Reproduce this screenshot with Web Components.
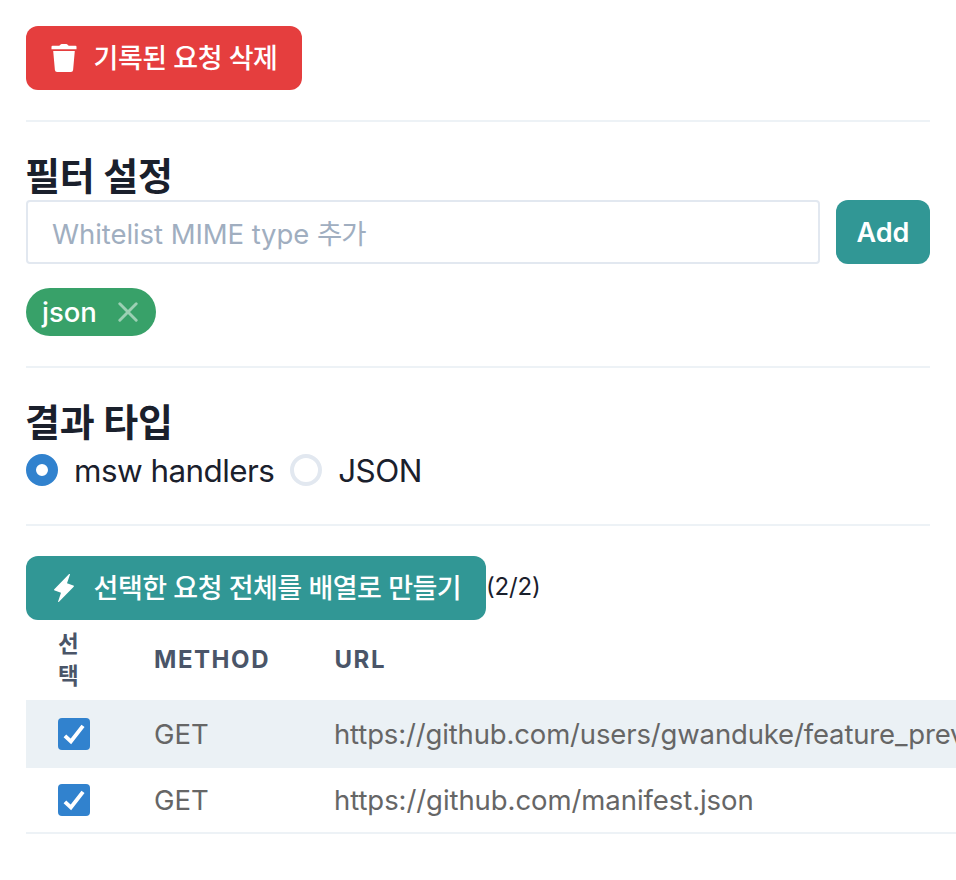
<!DOCTYPE html>
<html lang="ko">
<head>
<meta charset="utf-8">
<title>Request recorder</title>
<style>
html,body{margin:0;background:#fff;overflow:hidden}
body{height:880px;font-family:Inter,"Noto Sans CJK KR",sans-serif;color:#1a202c;line-height:1}
</style>
</head>
<body>
<recorder-app></recorder-app>
<script>
function define(name, html) {
  const t = document.createElement('template');
  t.innerHTML = html;
  customElements.define(name, class extends HTMLElement {
    constructor() {
      super();
      this.attachShadow({mode: 'open'}).append(t.content.cloneNode(true));
    }
  });
}

define('ui-text', `<style>
:host{display:block;white-space:nowrap}
</style><slot></slot>`);

define('ui-button', `<style>
:host{display:inline-flex;align-items:center;box-sizing:border-box;height:64px;padding:0 24px;border-radius:12px;background:var(--bg,#319795);color:#fff;font-size:27px;font-weight:500;letter-spacing:-.5px;white-space:nowrap;flex:none}
::slotted(svg){width:28px;height:28px;margin-right:15.6px;flex:none}
</style><slot></slot>`);

define('ui-divider', `<style>:host{display:block;height:2px;background:#edf2f6}</style>`);

define('ui-heading', `<style>
:host{display:flex;align-items:center;box-sizing:border-box;height:48px;padding-bottom:1px;margin-left:-1px;font-size:38px;font-weight:700;letter-spacing:-.25px;white-space:nowrap}
</style><slot></slot>`);

define('ui-input', `<style>
:host{display:flex;flex:1;align-items:center;box-sizing:border-box;height:64px;padding:5px 24px 0;border:2px solid #e2e8f0;border-radius:4px;color:#a0aec0;font-size:27.5px;letter-spacing:-.07px;white-space:nowrap}
.ko{letter-spacing:-.9px}
</style><span><slot></slot></span>`);

define('ui-tag', `<style>
:host{display:inline-flex;align-items:center;box-sizing:border-box;width:130px;height:48px;padding:0 16px;border-radius:24px;background:#38a169;color:#fff;font-size:27.5px;font-weight:500}
span{padding-top:2px}
svg{width:20px;height:20px;margin-left:auto;margin-right:2px;opacity:.5}
</style><span><slot></slot></span><svg viewBox="0 0 20 20"><path d="M1.8 1.8 18.2 18.2M18.2 1.8 1.8 18.2" stroke="#fff" stroke-width="2.9" stroke-linecap="round"/></svg>`);

define('ui-radio', `<style>
:host{display:flex;align-items:center;font-size:31.4px;letter-spacing:-.55px;white-space:nowrap}
i{display:block;box-sizing:border-box;width:32px;height:32px;margin-right:16px;border:4px solid #e2e8f0;border-radius:50%}
:host([checked]) i{border:10px solid #3182ce}
span{padding-top:3px}
</style><i></i><span><slot></slot></span>`);

define('ui-check', `<style>
:host{display:block;width:32px;height:32px;border-radius:4px;background:#3182ce}
svg{display:block}
</style><svg width="32" height="32" viewBox="0 0 32 32"><path d="M6.9 17.9 12.9 23.4 25 7.9" fill="none" stroke="#fff" stroke-width="3.9"/></svg>`);

define('request-row', `<style>
:host{display:grid;grid-template-columns:96px 180px 1fr;align-items:center;box-sizing:border-box;height:66px;padding-left:32px;border-bottom:2px solid #edf2f6;color:#666;font-size:27.5px}
:host([striped]){height:68px;background:#ebf1f5;border-bottom:0}
ui-text{padding-top:2px}
#url{letter-spacing:var(--url-spacing,0)}
</style><ui-check></ui-check><ui-text>GET</ui-text><ui-text id="url"><slot></slot></ui-text>`);

define('request-table', `<style>
:host{display:block;margin-right:-26px;overflow:hidden}
header{display:grid;grid-template-columns:96px 180px 1fr;align-items:center;height:80px;padding-left:32px;color:#4a5568;font-size:24px;font-weight:700;letter-spacing:1.55px}
.pick{width:24px;line-height:32px;font-size:22.5px;white-space:normal;word-break:break-all;letter-spacing:0}
</style><header><ui-text class="pick">선택</ui-text><ui-text>METHOD</ui-text><ui-text style="padding-left:.5px">URL</ui-text></header><slot></slot>`);

define('recorder-app', `<style>
:host{display:block;padding:26px 26px 0}
ui-divider{margin:30px 0}
.row{display:flex;align-items:center}
.filter{gap:16px;margin-bottom:24px}
.radios{gap:16px;height:48px}
.filter ui-button{width:94px;padding:0;justify-content:center;font-weight:600;letter-spacing:0}
ui-tag{display:flex}
.count{padding-bottom:3px;font-size:24px;letter-spacing:-.2px}
</style>
<ui-button style="--bg:#e53e3e;width:276px"><svg viewBox="0 0 28 28" fill="#fff"><path d="M9.3 1.8 10.6 .4Q11 0 11.6 0h4.8q.6 0 1 .4l1.3 1.4h6.8q1 0 1 1v2.5H1.5V2.8q0-1 1-1zM3.2 7h21.6l-1.7 18.9Q22.9 28 20.9 28H7.1Q5.1 28 4.9 25.9z"/></svg><ui-text>기록된 요청 삭제</ui-text></ui-button>
<ui-divider></ui-divider>
<ui-heading>필터 설정</ui-heading>
<div class="row filter"><ui-input>Whitelist MIME type <span style="letter-spacing:-.9px">추가</span></ui-input><ui-button>Add</ui-button></div>
<ui-tag>json</ui-tag>
<ui-divider></ui-divider>
<ui-heading>결과 타입</ui-heading>
<div class="row radios"><ui-radio checked>msw handlers</ui-radio><ui-radio>JSON</ui-radio></div>
<ui-divider></ui-divider>
<div class="row"><ui-button style="width:460px"><svg viewBox="0 0 28 28" fill="#fff"><path d="M19.1.1 4.3 15.2q-.7.9.4 1.3l6.3 2.2L8.1 27.4q0 .9.9.4L23.7 12.7q.7-.9-.4-1.3L17 9.2 20 .5q0-.8-.9-.4z"/></svg><ui-text>선택한 요청 전체를 배열로 만들기</ui-text></ui-button><ui-text class="count">(2/2)</ui-text></div>
<request-table>
<request-row striped style="--url-spacing:-.15px">https://github.com/users/gwanduke/feature_prev</request-row>
<request-row style="--url-spacing:-.07px">https://github.com/manifest.json</request-row>
</request-table>`);
</script>
</body>
</html>
